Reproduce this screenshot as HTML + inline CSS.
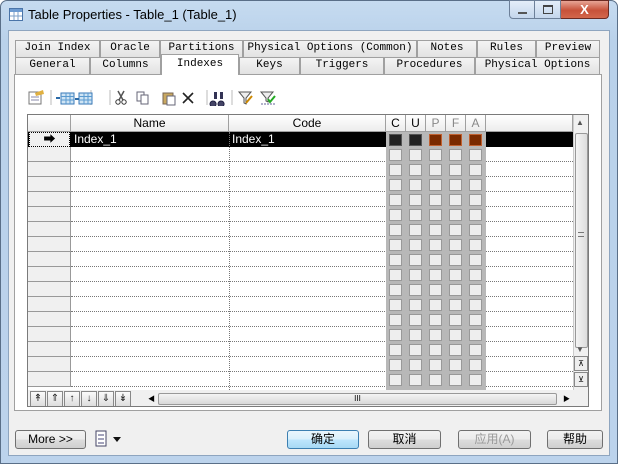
<!DOCTYPE html>
<html><head><meta charset="utf-8"><style>
*{margin:0;padding:0;box-sizing:border-box}
body{width:618px;height:464px;overflow:hidden;background:#fff;font-family:"Liberation Sans","Noto Sans CJK SC",sans-serif;font-size:12px;position:relative}
.a{position:absolute}
.win{left:0;top:0;width:618px;height:464px;background:linear-gradient(#c6dbf0,#b9d1ea 40px,#bcd3ec);border:1px solid #5a6f88;border-radius:7px 7px 0 0}
.body{left:8px;top:30px;width:602px;height:426px;background:#f0f0f0;border:1px solid #8ea5bf}
.tab{position:absolute;height:17px;border:1px solid #a0a0a0;border-bottom:none;background:linear-gradient(#f4f4f4,#e2e2e2);font-family:"Liberation Mono",monospace;font-size:11px;text-align:center;line-height:15px;color:#000}
.panel{left:14px;top:74px;width:588px;height:337px;background:#fff;border:1px solid #a0a0a0}
.grid{left:27px;top:114px;width:562px;height:293px;border:1px solid #7a7a7a;background:#fff;overflow:hidden}
.hd{position:absolute;top:0;height:17px;background:linear-gradient(#fff,#ececec);border-right:1px solid #a0a0a0;border-bottom:1px solid #a0a0a0;text-align:center;line-height:16px;font-size:12px}
.btn{position:absolute;height:19px;border:1px solid #707070;border-radius:3px;background:linear-gradient(#f2f2f2,#ebebeb 50%,#dddddd 50%,#cfcfcf);text-align:center;line-height:17px;font-size:12px}
.nb{position:absolute;top:1px;width:16px;height:16px;border:1px solid #888;background:linear-gradient(#fafafa,#ddd);font-size:10px;text-align:center;line-height:14px;color:#222}
</style></head><body>
<div class="a win"></div>
<svg class="a" style="left:9px;top:8px" width="14" height="13"><rect x=".5" y=".5" width="13" height="12" fill="#fff" stroke="#4a74a8"/><rect x="1" y="1" width="12" height="3" fill="#6d9bd1"/><path d="M5 4v8M9 4v8M1 8h12" stroke="#7ea0c8"/></svg>
<div class="a" style="left:28px;top:7px;font-size:13px;color:#000">Table Properties - Table_1 (Table_1)</div>
<div class="a" style="left:509px;top:0;width:26px;height:19px;border:1px solid #6d8099;border-radius:0 0 0 4px;background:linear-gradient(#e4eef9,#c4d6ec)"><div class="a" style="left:8px;top:11px;width:9px;height:2px;background:#555"></div></div>
<div class="a" style="left:535px;top:0;width:26px;height:19px;border:1px solid #6d8099;border-left:none;background:linear-gradient(#e4eef9,#c4d6ec)"><div class="a" style="left:8px;top:4px;width:10px;height:9px;border:1px solid #444;border-top-width:2px"></div></div>
<div class="a" style="left:561px;top:0;width:48px;height:19px;border:1px solid #6b2a22;border-left:none;border-radius:0 0 4px 0;background:linear-gradient(#e7a596,#c7523a 55%,#d3674c);color:#fff;font-weight:bold;text-align:center;font-size:13px;line-height:17px">X</div>
<div class="a body"></div>
<div class="tab" style="left:15px;top:40px;width:85px">Join Index</div>
<div class="tab" style="left:100px;top:40px;width:60px">Oracle</div>
<div class="tab" style="left:160px;top:40px;width:83px">Partitions</div>
<div class="tab" style="left:243px;top:40px;width:174px">Physical Options (Common)</div>
<div class="tab" style="left:417px;top:40px;width:60px">Notes</div>
<div class="tab" style="left:477px;top:40px;width:59px">Rules</div>
<div class="tab" style="left:536px;top:40px;width:64px">Preview</div>
<div class="a panel"></div>
<div class="tab" style="left:15px;top:57px;width:75px">General</div>
<div class="tab" style="left:90px;top:57px;width:71px">Columns</div>
<div class="tab" style="left:161px;top:54px;width:78px;height:21px;background:#fff;line-height:18px">Indexes</div>
<div class="tab" style="left:239px;top:57px;width:61px">Keys</div>
<div class="tab" style="left:300px;top:57px;width:84px">Triggers</div>
<div class="tab" style="left:384px;top:57px;width:91px">Procedures</div>
<div class="tab" style="left:475px;top:57px;width:125px">Physical Options</div>
<svg class="a" style="left:27px;top:88px" width="270" height="18">
<rect x="2" y="4" width="12" height="12" fill="#fff" stroke="#777"/><path d="M8 5l8-3 1 4-8 2z" fill="#e0b040"/><path d="M4 9h8M4 12h8" stroke="#88a"/>
<path d="M24 2v15M64 2v15M83 2v15M180 2v15M205 2v15" stroke="#bbb"/>
<rect x="34" y="5" width="13" height="11" fill="#cfe4f4" stroke="#3a7ab8"/><path d="M34 8.5h13M34 12h13M39 5v11M43 5v11" stroke="#5a9ad0"/><path d="M29 10h4" stroke="#2a6aa8" stroke-width="2"/>
<rect x="52" y="5" width="13" height="11" fill="#cfe4f4" stroke="#3a7ab8"/><path d="M52 8.5h13M52 12h13M57 5v11M61 5v11" stroke="#5a9ad0"/><path d="M48 11h4" stroke="#2a6aa8" stroke-width="2"/>
<path d="M91 3l5 9M97 3l-5 9" stroke="#555" stroke-width="1.5"/><circle cx="91" cy="14" r="2.2" fill="none" stroke="#333"/><circle cx="97" cy="14" r="2.2" fill="none" stroke="#333"/>
<rect x="110" y="4" width="7" height="9" fill="#fff" stroke="#667"/><rect x="114" y="7" width="7" height="9" fill="#fff" stroke="#667"/>
<rect x="136" y="5" width="10" height="11" fill="#c9a860" stroke="#765"/><rect x="140" y="8" width="8" height="9" fill="#fff" stroke="#667"/>
<path d="M156 5l10 10M166 5l-10 10" stroke="#222" stroke-width="1.6"/>
<path d="M186 13a3 3 0 1 0 0.1 0M194 13a3 3 0 1 0 0.1 0" fill="#446" stroke="#224"/><rect x="187" y="4" width="3" height="7" fill="#335"/><rect x="193" y="4" width="3" height="7" fill="#335"/>
<path d="M212 4h12l-5 6v6l-2-1v-5z" fill="#eee" stroke="#555"/><path d="M219 15l6-7" stroke="#c80" stroke-width="2"/>
<path d="M234 4h12l-5 6v4l-2-1v-3z" fill="#eee" stroke="#555"/><path d="M241 11l2 3 5-6" stroke="#2a2" stroke-width="2" fill="none"/><path d="M234 16h14" stroke="#669" stroke-dasharray="2 1"/>
</svg>
<div class="a grid" id="g">
<div class="hd" style="left:0;width:43px"></div>
<div class="hd" style="left:43px;width:158px">Name</div>
<div class="hd" style="left:201px;width:157px">Code</div>
<div class="hd" style="left:358px;width:20px">C</div>
<div class="hd" style="left:378px;width:20px">U</div>
<div class="hd" style="left:398px;width:20px;color:#888">P</div>
<div class="hd" style="left:418px;width:20px;color:#888">F</div>
<div class="hd" style="left:438px;width:20px;color:#888">A</div>
<div class="hd" style="left:458px;width:87px"></div>
<div class="a" style="left:0;top:17px;width:545px;height:15px;background:#000"></div>
<div class="a" style="left:46px;top:17px;color:#fff;line-height:15px">Index_1</div>
<div class="a" style="left:204px;top:17px;color:#fff;line-height:15px">Index_1</div>
<div class="a" style="left:1px;top:17px;width:41px;height:15px;background:#f0f0f0;border:1px dotted #000;text-align:center;line-height:12px;font-size:12px">➡</div>
<div class="a" style="left:545px;top:0;width:16px;height:277px;background:#f0f0f0;border-left:1px solid #ccc"></div>
<div class="a" style="left:548px;top:3px;font-size:8px;color:#555">▲</div>
<div class="a" style="left:547px;top:18px;width:13px;height:215px;border:1px solid #999;border-radius:2px;background:linear-gradient(90deg,#f4f4f4,#dcdcdc)"></div>
<div class="a" style="left:550px;top:117px;width:6px;height:5px;border-top:1px solid #777;border-bottom:1px solid #777"></div>
<div class="a" style="left:548px;top:230px;font-size:8px;color:#555">▼</div>
<div class="a" style="left:546px;top:241px;width:14px;height:15px;border:1px solid #888;background:#eee;font-size:8px;text-align:center;line-height:13px">⊼</div>
<div class="a" style="left:546px;top:257px;width:14px;height:15px;border:1px solid #888;background:#eee;font-size:8px;text-align:center;line-height:13px">⊻</div>
<div class="a" style="left:0;top:275px;width:562px;height:18px;background:#f0f0f0"></div>
<div class="a" style="left:0;top:275px;width:110px;height:18px">
<div class="nb" style="left:2px">↟</div><div class="nb" style="left:19px">⇑</div><div class="nb" style="left:36px">↑</div><div class="nb" style="left:53px">↓</div><div class="nb" style="left:70px">⇓</div><div class="nb" style="left:87px">↡</div></div>
<div class="a" style="left:120px;top:279px;font-size:7px">◀</div>
<div class="a" style="left:130px;top:278px;width:399px;height:12px;border:1px solid #999;border-radius:2px;background:linear-gradient(#f4f4f4,#d8d8d8);text-align:center;font-size:8px;line-height:10px">III</div>
<div class="a" style="left:535px;top:279px;font-size:7px">▶</div>
</div>
<script>
var g=document.getElementById('g'),h='';
for(var i=0;i<16;i++){var t=32+i*15;
h+='<div class="a" style="left:0;top:'+t+'px;width:43px;height:15px;background:#f0f0f0;border-right:1px solid #999;border-bottom:1px solid #999"></div>';
h+='<div class="a" style="left:43px;top:'+(t+14)+'px;width:502px;border-top:1px dotted #777"></div>';}
h+='<div class="a" style="left:201px;top:17px;height:258px;border-left:1px dotted #777"></div>';
h+='<div class="a" style="left:358px;top:17px;width:100px;height:258px;background:#b8b8b8"></div>';
for(var i=0;i<17;i++)for(var j=0;j<5;j++){var t=17+i*15,l=358+j*20,c=i==0?(j<2?'#222':'#7a2a00'):'#eee',b=i==0?(j<2?'#555':'#c06030'):'#999';
h+='<div class="a" style="left:'+(l+3)+'px;top:'+(t+2)+'px;width:13px;height:12px;background:'+c+';border:1px solid '+b+'"></div>';}
g.insertAdjacentHTML('beforeend',h);
</script>
<div class="btn" style="left:15px;top:430px;width:71px">More &gt;&gt;</div>
<svg class="a" style="left:95px;top:430px" width="30" height="18"><rect x="1" y="1" width="10" height="15" fill="#fff" stroke="#446"/><path d="M3 5h6M3 9h6M3 13h6" stroke="#447"/><path d="M18 7h8l-4 5z" fill="#111"/></svg>
<div class="btn" style="left:287px;top:430px;width:72px;border-color:#3c7fb1;background:linear-gradient(#eaf6fd,#d9f0fc 50%,#bee6fd 50%,#a7d9f5)">确定</div>
<div class="btn" style="left:368px;top:430px;width:73px">取消</div>
<div class="btn" style="left:458px;top:430px;width:73px;color:#999">应用(A)</div>
<div class="btn" style="left:547px;top:430px;width:56px">帮助</div>
</body></html>
